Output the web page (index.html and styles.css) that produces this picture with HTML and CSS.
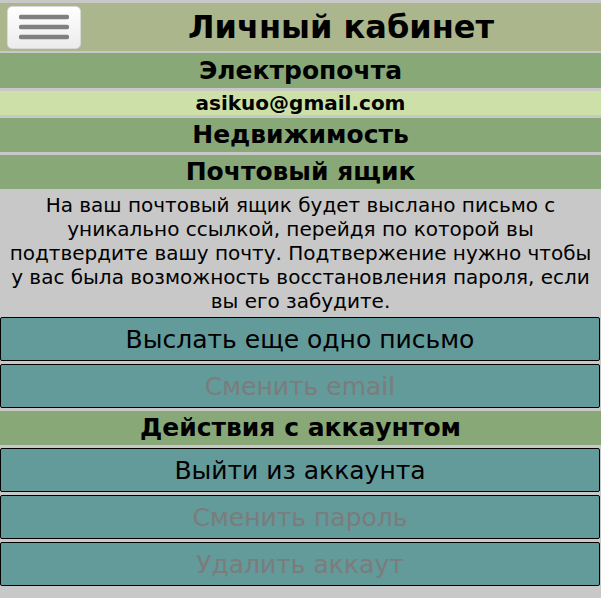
FILE: index.html
```html
<!DOCTYPE html>
<html lang="ru">
<head>
<meta charset="utf-8">
<title>Личный кабинет</title>
<link rel="stylesheet" href="styles.css">
</head>
<body>
<header class="topbar">
  <button class="menu-btn" aria-label="Меню">
    <svg width="50" height="26" viewBox="0 0 50 26">
      <line x1="2" y1="3" x2="48" y2="3" stroke="#808080" stroke-width="4.5" stroke-linecap="round"/>
      <line x1="2" y1="13" x2="48" y2="13" stroke="#808080" stroke-width="4.5" stroke-linecap="round"/>
      <line x1="2" y1="23" x2="48" y2="23" stroke="#808080" stroke-width="4.5" stroke-linecap="round"/>
    </svg>
  </button>
  <h1 class="title">Личный кабинет</h1>
</header>
<div class="section section-email">Электропочта</div>
<div class="email">asikuo@gmail.com</div>
<div class="section">Недвижимость</div>
<div class="section">Почтовый ящик</div>
<p class="info">На ваш почтовый ящик будет выслано письмо с уникально ссылкой, перейдя по которой вы подтвердите вашу почту. Подтвержение нужно чтобы у вас была возможность восстановления пароля, если вы его забудите.</p>
<button class="action first">Выслать еще одно письмо</button>
<button class="action disabled">Сменить email</button>
<div class="section">Действия с аккаунтом</div>
<button class="action">Выйти из аккаунта</button>
<button class="action disabled">Сменить пароль</button>
<button class="action disabled">Удалить аккаут</button>
</body>
</html>
```
FILE: styles.css
```css
html, body {
  margin: 0;
  padding: 0;
}
body {
  background: #c8c8c8;
  font-family: "DejaVu Sans", sans-serif;
  color: #000;
  padding-top: 3px;
  width: 601px;
}
.topbar {
  display: flex;
  align-items: center;
  height: 48px;
  background: #abb68d;
}
.menu-btn {
  margin-left: 7px;
  width: 74px;
  height: 43px;
  padding: 0;
  border: 1px solid #d8d8d8;
  border-radius: 5px;
  background: linear-gradient(#ffffff, #ececec);
  display: flex;
  align-items: center;
  justify-content: center;
}
.title {
  flex: 1;
  margin: 0;
  text-align: center;
  font-size: 32px;
  font-weight: bold;
}
.section {
  margin-top: 3px;
  height: 34px;
  line-height: 34px;
  background: #88a878;
  text-align: center;
  font-weight: bold;
  font-size: 25px;
}
.section-email {
  margin-top: 2px;
  height: 35px;
  line-height: 35px;
}
.email {
  margin-top: 3px;
  height: 24px;
  line-height: 24px;
  background: #cce0a8;
  text-align: center;
  font-weight: bold;
  font-size: 20px;
}
.info {
  margin: 0;
  padding: 4px 4px;
  text-align: center;
  font-size: 20px;
  line-height: 24px;
}
.action {
  display: block;
  box-sizing: border-box;
  width: 600px;
  height: 44px;
  margin: 3px 0 0 0;
  padding: 0;
  border: 1px solid #000;
  border-radius: 2px;
  background: #639a9a;
  font-family: "DejaVu Sans", sans-serif;
  font-size: 25px;
  color: #000;
  text-align: center;
}
.action.first {
  margin-top: 0;
}
.action.disabled {
  color: #7c7c7c;
}
```
